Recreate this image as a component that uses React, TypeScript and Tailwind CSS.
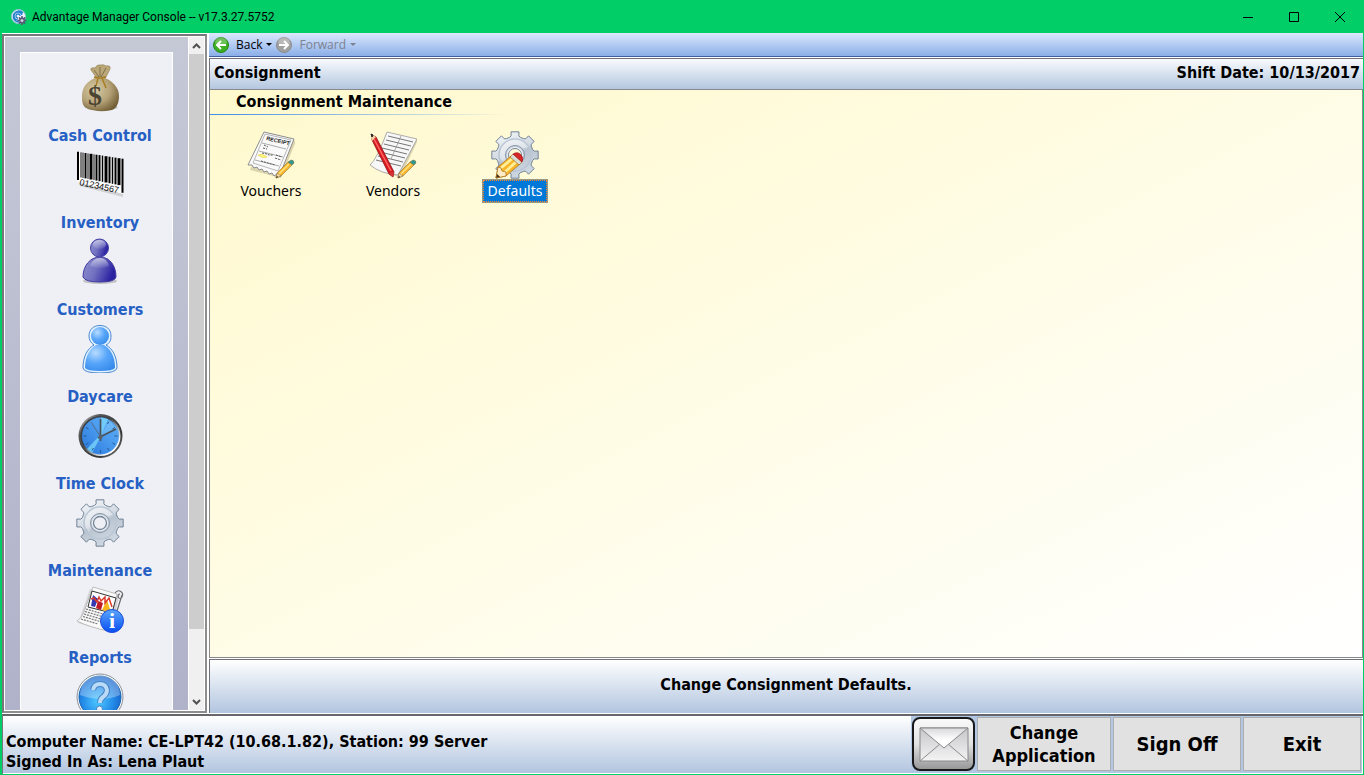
import React from "react";

function gearPath(cx: number, cy: number, inner: number, outer: number): string {
  const points: string[] = [];
  for (let i = 0; i < 8; i++) {
    const base = (i * Math.PI) / 4 - Math.PI / 2;
    const corners: [number, number][] = [
      [-0.29, inner],
      [-0.2, inner + 1],
      [-0.17, outer],
      [0.17, outer],
      [0.2, inner + 1],
      [0.29, inner],
    ];
    corners.forEach(([offset, radius]) => {
      const x = cx + radius * Math.cos(base + offset);
      const y = cy + radius * Math.sin(base + offset);
      points.push(`${x.toFixed(2)} ${y.toFixed(2)}`);
    });
  }
  return `M${points.join("L")}Z`;
}

function MoneyBagIcon() {
  return (
    <svg viewBox="0 0 48 48" className="size-12" aria-hidden="true">
      <defs>
        <radialGradient id="bag" cx="0.35" cy="0.35" r="0.75">
          <stop offset="0" stopColor="#d8cba5" />
          <stop offset="0.55" stopColor="#b5a277" />
          <stop offset="1" stopColor="#6f5a32" />
        </radialGradient>
      </defs>
      <path d="M8 43q18 7 34 1l-3-4H10z" fill="#777" opacity="0.35" />
      <path d="M19 14C12 17 6 22 6 32c0 5 0 9 4 12 7 4 23 4 28 1 3-2 5-7 5-13 0-9-7-15-14-18z" fill="url(#bag)" />
      <path d="M20 13l-5-7q-1-3 4-2 2-4 6-3 2-1 5 1 5-1 4 3-1 2-4 8z" fill="#bba878" stroke="#8d7b4e" strokeWidth="0.6" />
      <path d="M18 6l5 7M24 3l0 10M30 4l-5 9" stroke="#82704a" strokeWidth="1" fill="none" />
      <path d="M18 13q6 2 12 0M26 14l4 10M22 14l-2 8" stroke="#a77c1e" strokeWidth="1.4" fill="none" />
      <text x="12" y="41" fontSize="28" className="font-['Liberation_Serif',serif] font-bold" fill="#4c4432">$</text>
    </svg>
  );
}

function BarcodeIcon() {
  const bars: [number, number][] = [
    [2, 2], [5, 1], [7, 1], [9.5, 2], [12, 1], [15, 3], [18, 1], [20.5, 2], [23.5, 2],
    [26.5, 1.5], [30, 3], [33.5, 2], [36.5, 1.5], [39.5, 2], [43, 3], [46.5, 2],
  ];
  return (
    <svg viewBox="0 0 48 48" className="size-12" aria-hidden="true">
      <path d="M3 32l44 10v4L4 35z" fill="#999" opacity="0.35" />
      <path d="M1 1l46 7v35L1 30z" fill="#fff" />
      {bars.map(([x, width], i) => (
        <path
          key={x}
          d={`M${x} ${(0.5 + x * 0.155).toFixed(1)}V${(25.5 + x * 0.2 + (i === 0 ? 3 : i === 15 ? 7 : 0)).toFixed(1)}`}
          stroke="#000"
          strokeWidth={width}
        />
      ))}
      <text x="3" y="34" fontSize="9" transform="rotate(12 3 34)" className="font-['Liberation_Sans',sans-serif] font-normal" fill="#111">01234567</text>
    </svg>
  );
}

function CustomerIcon() {
  return (
    <svg viewBox="0 0 48 48" className="size-12" aria-hidden="true">
      <defs>
        <linearGradient id="cust" x1="0" y1="0" x2="1" y2="0.3">
          <stop offset="0" stopColor="#9292d2" />
          <stop offset="0.5" stopColor="#7070c0" />
          <stop offset="1" stopColor="#2b22a2" />
        </linearGradient>
        <linearGradient id="custShine" x1="0" y1="0" x2="0" y2="1">
          <stop offset="0" stopColor="#fff" stopOpacity="0.55" />
          <stop offset="1" stopColor="#fff" stopOpacity="0.05" />
        </linearGradient>
      </defs>
      <ellipse cx="24" cy="43" rx="17" ry="3" fill="#555" opacity="0.3" />
      <path d="M7 39C7 28 14 19 24 19s16 9 16 20q-1 5-16 5T7 39z" fill="url(#cust)" stroke="#4139a0" />
      <circle cx="23.500" cy="10" r="9" fill="url(#cust)" stroke="#4640a7" />
      <ellipse cx="23.500" cy="6.500" rx="6.500" ry="4.500" fill="url(#custShine)" />
      <path d="M14 28q3-8 10-8t9 8q-9 4-19 0z" fill="url(#custShine)" />
    </svg>
  );
}

function DaycareIcon() {
  return (
    <svg viewBox="0 0 48 48" className="size-12" aria-hidden="true">
      <defs>
        <radialGradient id="day" cx="0.35" cy="0.3" r="0.8">
          <stop offset="0" stopColor="#b8dcff" />
          <stop offset="0.5" stopColor="#58a6fa" />
          <stop offset="1" stopColor="#368bea" />
        </radialGradient>
      </defs>
      <path d="M18 20C11 24 7 32 7 43q1 5 17 5t17-5c0-11-4-19-11-23 4-2 5-5 5-9C35 4 30 .5 24 .5S13 4 13 11c0 4 2 7 5 9z" fill="#e4f2ff" stroke="#4687cd" />
      <path d="M20 20C13 24 9 32 9 43q2 3 15 3t15-3c0-11-4-19-11-23z" fill="url(#day)" />
      <circle cx="24" cy="11" r="9" fill="url(#day)" />
    </svg>
  );
}

function ClockIcon() {
  return (
    <svg viewBox="0 0 48 48" className="size-12" aria-hidden="true">
      <defs>
        <linearGradient id="rim" x1="0" y1="0" x2="1" y2="1">
          <stop offset="0" stopColor="#eee" />
          <stop offset="0.25" stopColor="#555" />
          <stop offset="0.7" stopColor="#333" />
          <stop offset="1" stopColor="#888" />
        </linearGradient>
        <linearGradient id="rimLight" x1="0" y1="0" x2="1" y2="1">
          <stop offset="0.4" stopColor="#3c4248" />
          <stop offset="0.8" stopColor="#fff" />
        </linearGradient>
        <linearGradient id="face" x1="0" y1="1" x2="1" y2="0">
          <stop offset="0" stopColor="#2677dc" />
          <stop offset="0.6" stopColor="#4d9df0" />
          <stop offset="1" stopColor="#5fabf4" />
        </linearGradient>
      </defs>
      <circle cx="24.500" cy="24" r="22" fill="url(#rim)" />
      <circle cx="24.500" cy="24" r="20" fill="url(#rimLight)" />
      <circle cx="24.500" cy="24" r="18.500" fill="url(#face)" />
      <path d="M25 24l7-17-7-1.500V22L11 37l5 4z" fill="#7cd8fb" opacity="0.75" />
      <path d="M25 24l16-7-8-9z" fill="#a3e5fb" opacity="0.3" />
      <path d="M24.500 7v3M24.500 38v3M7.500 24h3M38.500 24h3M33 9.500l-1.500 2.500M39 15.500l-2.500 1.500M10 15.500l2.500 1.500M10 32.500l2.500-1.500M39 32.500L36.500 31M33 38.500L31.500 36M16 38.500l1.500-2.500" stroke="#225a91" />
      <path d="M24.500 29V7M22 26l18-9" stroke="#47515c" strokeWidth="1.700" />
      <path d="M26 27L15 10" stroke="#56616c" strokeWidth="0.800" />
      <circle cx="24.500" cy="25" r="2" fill="#59616a" />
    </svg>
  );
}

function GearShape() {
  return (
    <>
      <defs>
        <linearGradient id="gear" x1="0.2" y1="0" x2="0.7" y2="1">
          <stop offset="0" stopColor="#f4f7fa" />
          <stop offset="0.48" stopColor="#cfd7e0" />
          <stop offset="0.52" stopColor="#b8c3cf" />
          <stop offset="1" stopColor="#d2dce6" />
        </linearGradient>
      </defs>
      <path d={gearPath(24, 24, 18.5, 23.5)} fill="url(#gear)" stroke="#718295" strokeLinejoin="round" />
      <circle cx="24" cy="24" r="16" fill="none" stroke="#b9c6d3" strokeWidth="1.500" />
      <path d="M9 23a15 15 0 0 1 28-7q-16 0-24 17-4-5-4-10z" fill="#fff" opacity="0.35" />
      <circle cx="24" cy="24" r="9.500" fill="#c7d0da" stroke="#8796a7" />
      <circle cx="24" cy="24" r="8" fill="#edf1f4" />
    </>
  );
}

function GearIcon() {
  return (
    <svg viewBox="0 0 48 48" className="size-12" aria-hidden="true">
      <GearShape />
      <circle cx="24" cy="24" r="6.500" fill="#eff0f5" stroke="#738599" strokeWidth="1.300" />
    </svg>
  );
}

function ReportIcon() {
  return (
    <svg viewBox="0 0 48 48" className="size-12" aria-hidden="true">
      <path d="M14 3l29 6L36 47 2 37z" fill="#999" opacity="0.3" />
      <path d="M17 1l24 7-9 37Q13 41 1 35q5-3 7-9z" fill="#f9f9f9" stroke="#b0b0b0" strokeWidth="0.800" />
      <path d="M39 7q2-3 5-2 4 2 2 6-2 3-4 0 0-3 2-3M46 9l-5 16" fill="none" stroke="#6d6d6d" strokeWidth="1.200" />
      <path d="M16 5l24 7-4 15-24-6z" fill="#fff" stroke="#333" />
      <path d="M17 9l5 4-3 8-4-1z" fill="#3637b5" />
      <path d="M22 15l5 2-2 7-5-2z" fill="#bd1b26" />
      <path d="M26 24l5-10 4 12z" fill="#f8b51c" />
      <path d="M15 13l3-1 3 4 2-5 2 4 4-4 0 6 4-5 3 9" fill="none" stroke="#db3c2c" strokeWidth="1.500" />
      <path d="M10 23l17 5M9 25.500l17 5M8 28l17 5M7 30.500l17 5M5 33l17 5" stroke="#777" strokeWidth="1.200" strokeDasharray="2 1" />
      <defs>
        <linearGradient id="info" x1="0" y1="0" x2="0" y2="1">
          <stop offset="0" stopColor="#5ba6fc" />
          <stop offset="1" stopColor="#084df2" />
        </linearGradient>
      </defs>
      <circle cx="36" cy="35" r="11.500" fill="url(#info)" stroke="#1c50d9" />
      <text x="36" y="42" textAnchor="middle" fontSize="22" fill="#fff" className="font-['Liberation_Serif',serif] font-bold">i</text>
    </svg>
  );
}

function HelpIcon() {
  return (
    <svg viewBox="0 0 48 48" className="size-12" aria-hidden="true">
      <defs>
        <radialGradient id="help" cx="0.45" cy="0.6" r="0.6">
          <stop offset="0" stopColor="#4ec9ff" />
          <stop offset="0.6" stopColor="#248ce9" />
          <stop offset="1" stopColor="#1561c9" />
        </radialGradient>
      </defs>
      <circle cx="24" cy="24" r="23" fill="#f6f8fa" stroke="#8a9299" />
      <circle cx="24" cy="24" r="21" fill="url(#help)" stroke="#1763b4" />
      <path d="M4 22a20 20 0 0 1 40 0q-18 8-40 0z" fill="#fff" opacity="0.3" />
      <path d="M17 17q1-6 7-6t7 6q0 4-4 7-3 2-3 6" fill="none" stroke="#4682c4" strokeWidth="6" />
      <path d="M17 17q1-6 7-6t7 6q0 4-4 7-3 2-3 6" fill="none" stroke="#b9dbf8" strokeWidth="4" />
      <circle cx="23.500" cy="36" r="3" fill="#e4f2ff" stroke="#4682c4" />
    </svg>
  );
}

function SmallPencil() {
  return (
    <g stroke="#7d6437" strokeWidth="0.500">
      <path d="M29 47l1-5 11-11 4 3-11 11z" fill="#f6b52c" />
      <path d="M29 47l1-5 4 3z" fill="#f6dcad" />
      <path d="M32 43l10-10" stroke="#ffe37c" strokeWidth="1.500" />
      <path d="M41 31l3-2q3 0 3 3l-2 2z" fill="#2c9b93" />
      <path d="M29 47l1-2 1 1z" fill="#222" />
    </g>
  );
}

function VoucherIcon() {
  return (
    <svg viewBox="0 0 48 48" className="size-12" aria-hidden="true">
      <path d="M3 39L18 3l31 7-15 37z" fill="#8a825d" opacity="0.3" />
      <path d="M17 1l30 7-15 38-2-3-3 2-2-3-3 1-2-3-3 1-2-3-3 1-2-3-3 1-2-3-4 0z" fill="#fafafa" stroke="#8d8d8d" />
      <path d="M18 3l26 6-13 31-25-8z" fill="none" stroke="#999" strokeWidth="0.700" />
      <text x="19" y="9" fontSize="5.500" transform="rotate(13 19 9)" className="font-['Liberation_Sans',sans-serif] font-bold" fill="#222">RECEIPT</text>
      <path d="M15 12l24 6M12 20l24 6M8 29l24 6" stroke="#888" strokeWidth="0.700" />
      <path d="M17 14l4 2M16 17l4 1M15 22l5 1 2 1 4 0M29 24l6 2M28 27l6 2M14 30l14 4" stroke="#555" strokeDasharray="2 1" fill="none" />
      <path d="M11 24q5-2 9 2-5 2-9-2" fill="#fff68a" stroke="#eee06a" />
      <SmallPencil />
    </svg>
  );
}

function VendorIcon() {
  return (
    <svg viewBox="0 0 48 48" className="size-12" aria-hidden="true">
      <path d="M4 34L19 3l30 6-18 38z" fill="#8a825d" opacity="0.3" />
      <path d="M18 1l30 7-19 36Q12 43 1 34q7-6 17-33z" fill="#f7f7f7" stroke="#999" strokeWidth="0.800" />
      <path d="M19 5l25 6M17 9l25 6M15 13l25 6M13 17l25 6M11 21l25 6M9 25l25 6M7 29l25 6" stroke="#666" strokeWidth="0.900" />
      <path d="M32 5L22 28" stroke="#888" strokeWidth="0.700" />
      <path d="M3 4l4 2 18 35-1 5-4-3L3 9z" fill="#d91920" stroke="#8d1215" strokeWidth="0.800" />
      <path d="M5 8l17 32" stroke="#ff6662" strokeWidth="1.500" />
      <path d="M2 3l5 3-4 4z" fill="#f0cfa0" />
      <path d="M2 3l2 1-1 2z" fill="#222" stroke="#222" />
      <path d="M20 42l5-1-1 5z" fill="#d13a38" />
      <SmallPencil />
    </svg>
  );
}

function DefaultsIcon() {
  return (
    <svg viewBox="0 0 48 48" className="size-12" aria-hidden="true">
      <GearShape />
      <circle cx="24" cy="24" r="6.500" fill="#fffbd9" stroke="#738599" />
      <g stroke="#a56b13" strokeWidth="0.700">
        <path d="M5 47l2-11 13-11 9 8-14 12z" fill="#f8b72b" />
        <path d="M10 37l12-10M14 41l12-11" stroke="#fff09b" strokeWidth="2.500" />
        <path d="M5 47l2-11 3 1 1 3 4 1 0 4z" fill="#ffecc5" />
        <path d="M5 47l1-4 3 3z" fill="#333" />
        <path d="M19 26l3-3 9 8-3 3z" fill="#d9ddd5" />
        <path d="M22 23q5-3 8 1 3 3 1 7z" fill="#d7272b" stroke="#a41618" />
      </g>
    </svg>
  );
}

function ConsoleLogo() {
  return (
    <svg viewBox="0 0 16 16" className="size-4" aria-hidden="true">
      <circle cx="7.500" cy="7.500" r="7" fill="#f1f7fc" stroke="#97bed9" />
      <path d="M12 4A5.500 5.500 0 1 0 8 13M11 6A4 4 0 1 0 7 11M9 7A2 2 0 1 0 7 9" fill="none" stroke="#2382cf" strokeWidth="1.300" />
      <path d={gearPath(11, 11.5, 3, 4.5)} fill="#555876" />
      <circle cx="11" cy="11.500" r="1.500" fill="#d1d2df" />
    </svg>
  );
}

function ArrowDisc({ forward = false }: { forward?: boolean }) {
  return (
    <svg viewBox="0 0 16 16" className="size-4" aria-hidden="true">
      <circle cx="8" cy="8" r="7.500" fill={forward ? "#a0a0a0" : "#3caf23"} stroke={forward ? "#8c8c8c" : "#258717"} />
      <path d="M2 6a6 6 0 0 1 12 0q-6 3-12 0z" fill="#fff" opacity="0.25" />
      <path d={forward ? "M3 8h8M8 4l4 4-4 4" : "M13 8H5M8 4L4 8l4 4"} fill="none" stroke="#fff" strokeWidth="2" />
    </svg>
  );
}

function Caret() {
  return (
    <svg viewBox="0 0 6 4" className="h-1 w-[6px]" aria-hidden="true">
      <path d="M0 0h6L3 3z" fill="currentColor" />
    </svg>
  );
}

function EnvelopeIcon() {
  return (
    <svg viewBox="0 0 50 36" className="h-9 w-[50px]" aria-hidden="true">
      <defs>
        <linearGradient id="mail" x1="0" y1="0" x2="0" y2="1">
          <stop offset="0" stopColor="#c6c6ca" />
          <stop offset="1" stopColor="#f4f4f4" />
        </linearGradient>
        <linearGradient id="flap" x1="0" y1="0" x2="0" y2="1">
          <stop offset="0" stopColor="#d8d8da" />
          <stop offset="0.600" stopColor="#fff" />
        </linearGradient>
      </defs>
      <path d="M1 2h48v33H1z" fill="url(#mail)" stroke="#88888a" />
      <path d="M1 35l20-17M49 35L29 18" stroke="#8c8c8e" />
      <path d="M1 2h48L25 22z" fill="url(#flap)" stroke="#88888a" />
    </svg>
  );
}

const modules = [
  { label: "Cash Control", Icon: MoneyBagIcon },
  { label: "Inventory", Icon: BarcodeIcon },
  { label: "Customers", Icon: CustomerIcon },
  { label: "Daycare", Icon: DaycareIcon },
  { label: "Time Clock", Icon: ClockIcon },
  { label: "Maintenance", Icon: GearIcon },
  { label: "Reports", Icon: ReportIcon },
];

const tasks = [
  { label: "Vouchers", Icon: VoucherIcon, selected: false },
  { label: "Vendors", Icon: VendorIcon, selected: false },
  { label: "Defaults", Icon: DefaultsIcon, selected: true },
];

function TitleBar() {
  return (
    <header className="flex h-[33px] shrink-0 items-center pr-px pl-[11px]">
      <ConsoleLogo />
      <h1 className="ml-[5px] flex-1 font-['Roboto',sans-serif] text-[12px]">Advantage Manager Console -- v17.3.27.5752</h1>
      <button type="button" aria-label="Minimize" className="flex h-8 w-[46px] items-center justify-center">
        <svg viewBox="0 0 10 10" className="size-[10px]"><path d="M0 5.500h10" stroke="#000" /></svg>
      </button>
      <button type="button" aria-label="Maximize" className="flex h-8 w-[46px] items-center justify-center">
        <svg viewBox="0 0 10 10" className="size-[10px]"><path d="M.5 .5h9v9h-9z" fill="none" stroke="#000" /></svg>
      </button>
      <button type="button" aria-label="Close" className="flex h-8 w-[46px] items-center justify-center">
        <svg viewBox="0 0 10 10" className="size-[10px]"><path d="M0 0l10 10M10 0L0 10" stroke="#000" /></svg>
      </button>
    </header>
  );
}

function Sidebar() {
  return (
    <aside className="flex w-[205px] shrink-0 border-2 border-t-[#77777b] border-r-[#8d8d90] border-b-[#8d8d90] border-l-[#77777b] bg-white p-px">
      <nav aria-label="Modules" className="flex-1 overflow-hidden bg-linear-to-b from-[#c5c9d6] to-[#b0b2ca] px-[15px] pt-[15px]">
        <ul className="flex h-full flex-col overflow-hidden border-x border-t border-white bg-[#eff0f5] pt-[11px] pl-[7px]">
          {modules.map(({ label, Icon }) => (
            <li key={label} className="h-[87px] shrink-0">
              <button type="button" className="flex w-full flex-col items-center gap-3 text-[16px] leading-6 font-bold whitespace-nowrap text-[#2660c4]">
                <Icon />
                {label}
              </button>
            </li>
          ))}
          <li className="shrink-0">
            <button type="button" aria-label="Help" className="flex w-full justify-center">
              <HelpIcon />
            </button>
          </li>
        </ul>
      </nav>
      <div className="flex w-4 flex-col border-l border-white bg-[#f0f0f0] text-[#505050]">
        <button type="button" aria-label="Scroll up" className="flex h-[17px] items-center justify-center">
          <svg viewBox="0 0 9 6" className="h-[6px] w-[9px]"><path d="M1 5l3.500-3.500L8 5" fill="none" stroke="currentColor" strokeWidth="2" /></svg>
        </button>
        <div className="flex-1">
          <div className="h-9/10 bg-[#cdcdcd]" />
        </div>
        <button type="button" aria-label="Scroll down" className="flex h-[17px] items-center justify-center">
          <svg viewBox="0 0 9 6" className="h-[6px] w-[9px]"><path d="M1 1l3.500 3.500L8 1" fill="none" stroke="currentColor" strokeWidth="2" /></svg>
        </button>
      </div>
    </aside>
  );
}

function Workspace() {
  return (
    <main className="flex min-w-0 flex-1 flex-col">
      <div className="flex h-6 shrink-0 items-center border-b border-[#3f5f9f] bg-linear-to-b from-[#dce8fc] to-[#8bafe8] pl-[4px] font-['Open_Sans',sans-serif] text-[12px]">
        <button type="button" className="flex items-center">
          <ArrowDisc />
          <span className="mr-1 ml-[7px]">Back</span>
          <Caret />
        </button>
        <button type="button" disabled className="ml-1 flex items-center text-[#7b8290]">
          <ArrowDisc forward />
          <span className="mr-1 ml-[7px]">Forward</span>
          <Caret />
        </button>
      </div>
      <div className="mt-px flex h-[31px] shrink-0 items-center justify-between border-t border-l border-[#707078] bg-linear-to-b from-[#f9fbfe] to-[#b4c7df] pr-[3px] pb-[2px] pl-[4px] text-[16px] font-bold">
        <h2>Consignment</h2>
        <p>Shift Date: 10/13/2017</p>
      </div>
      <section className="flex min-h-0 flex-1 flex-col border border-[#88888c] bg-linear-to-br from-[#fff9cd] to-white">
        <h3 className="h-6 pl-[26px] text-[16px] leading-[23px] font-bold">Consignment Maintenance</h3>
        <div className="h-px w-[300px] shrink-0 bg-linear-to-r from-[#3d8cec] to-transparent" />
        <ul className="mt-4 flex">
          {tasks.map(({ label, Icon, selected }) => (
            <li key={label} className="flex w-[122px] justify-center">
              <button type="button" className="flex flex-col items-center font-['Noto_Sans',sans-serif] text-[14px] leading-5">
                <Icon />
                <span
                  className={
                    selected
                      ? "mt-px border border-dotted border-[#ff8728] bg-[#0078d7] px-1 text-white outline-1 outline-black/40"
                      : "mt-px border border-transparent px-1"
                  }
                >
                  {label}
                </span>
              </button>
            </li>
          ))}
        </ul>
      </section>
      <p className="mt-px flex h-[54px] shrink-0 items-center justify-center border-t border-l border-[#707078] bg-linear-to-b from-white to-[#b2c5df] pr-px pb-[3px] text-[16px] font-bold">
        Change Consignment Defaults.
      </p>
    </main>
  );
}

function Footer() {
  return (
    <footer className="mt-px flex h-[60px] shrink-0 border-t-2 border-l border-t-[#66666c] border-l-[#77777b] bg-white pr-px pb-px">
      <div className="flex flex-1 flex-col justify-end bg-linear-to-b from-white to-[#b2c5df] pb-px pl-[3px] text-[16px] leading-5 font-bold">
        <p>Computer Name: CE-LPT42 (10.68.1.82), Station: 99 Server</p>
        <p>Signed In As: Lena Plaut</p>
      </div>
      <div className="flex items-stretch gap-[2px] bg-[#b2c7e3] px-px pt-px pb-[2px] text-[20px] leading-6 font-bold">
        <button type="button" aria-label="Messages" className="flex w-[63px] items-center justify-center rounded-lg border-2 border-[#18181a] bg-linear-to-b from-[#fafafa] via-[#e2e2e2] to-[#98989a]">
          <EnvelopeIcon />
        </button>
        <button type="button" className="w-[134px] border border-[#adadad] bg-[#e1e1e1] pb-px text-[18px] leading-[23px]">
          Change
          <br />
          Application
        </button>
        <button type="button" className="w-32 border border-[#adadad] bg-[#e1e1e1] pb-px">Sign Off</button>
        <button type="button" className="w-[118px] border border-[#adadad] bg-[#e1e1e1] pb-px">Exit</button>
      </div>
    </footer>
  );
}

export default function App() {
  return (
    <div className="flex h-screen flex-col overflow-hidden bg-[#02ce68] pb-px font-['DejaVu_Sans_Condensed','Noto_Sans',sans-serif] text-black">
      <TitleBar />
      <div className="mr-px ml-[2px] flex min-h-0 flex-1 flex-col bg-white">
        <div className="flex min-h-0 flex-1 gap-[2px]">
          <div className="flex pt-px">
            <Sidebar />
          </div>
          <Workspace />
        </div>
        <Footer />
      </div>
    </div>
  );
}
